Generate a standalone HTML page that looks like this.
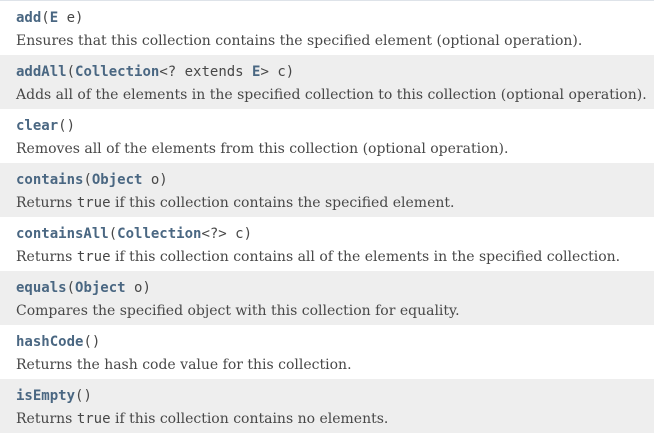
<!DOCTYPE html>
<html><head><style>
body{margin:0;width:654px;height:440px;background:#fff;overflow:hidden}
.top{height:1px;background:#dee3e9}
.r{height:54px;box-sizing:border-box;padding:6px 0 0 16px;color:#474747}
.g{background:#eeeeee}
.c{font-family:"DejaVu Sans Mono",monospace;font-size:14px;line-height:22px;height:23px;white-space:nowrap}
.c b{color:#4a6782}
.d{font-family:"DejaVu Serif",serif;font-size:14px;line-height:22px;white-space:nowrap}
.d code{font-family:"DejaVu Sans Mono",monospace;font-size:14px}
</style></head><body>
<div class="top"></div>
<div class="r"><div class="c"><b>add</b>(<b>E</b> e)</div><div class="d">Ensures that this collection contains the specified element (optional operation).</div></div>
<div class="r g"><div class="c"><b>addAll</b>(<b>Collection</b>&lt;? extends <b>E</b>&gt; c)</div><div class="d">Adds all of the elements in the specified collection to this collection (optional operation).</div></div>
<div class="r"><div class="c"><b>clear</b>()</div><div class="d">Removes all of the elements from this collection (optional operation).</div></div>
<div class="r g"><div class="c"><b>contains</b>(<b>Object</b> o)</div><div class="d">Returns <code>true</code> if this collection contains the specified element.</div></div>
<div class="r"><div class="c"><b>containsAll</b>(<b>Collection</b>&lt;?&gt; c)</div><div class="d">Returns <code>true</code> if this collection contains all of the elements in the specified collection.</div></div>
<div class="r g"><div class="c"><b>equals</b>(<b>Object</b> o)</div><div class="d">Compares the specified object with this collection for equality.</div></div>
<div class="r"><div class="c"><b>hashCode</b>()</div><div class="d">Returns the hash code value for this collection.</div></div>
<div class="r g"><div class="c"><b>isEmpty</b>()</div><div class="d">Returns <code>true</code> if this collection contains no elements.</div></div>
</body></html>
